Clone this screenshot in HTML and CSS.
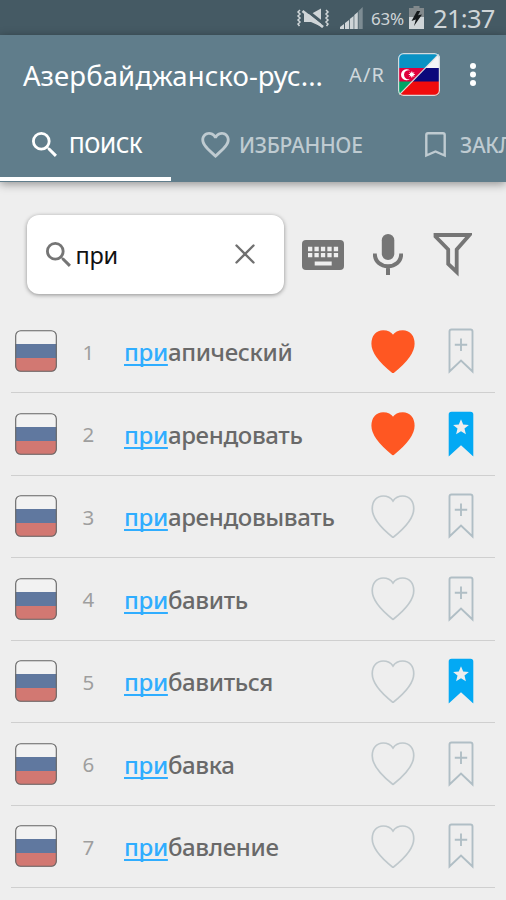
FILE: index.html
```html
<!DOCTYPE html>
<html lang="ru">
<head>
<meta charset="utf-8">
<title>Словарь</title>
<link rel="stylesheet" href="styles.css">
</head>
<body>
<svg class="defs" width="0" height="0">
  <symbol id="search" viewBox="3 3 17.5 17.5"><path d="M15.5 14h-.79l-.28-.27A6.471 6.471 0 0 0 16 9.5 6.5 6.5 0 1 0 9.5 16c1.61 0 3.09-.59 4.23-1.57l.27.28v.79l5 4.99L20.49 19l-4.99-5zm-6 0C7.01 14 5 11.990 5 9.500S7.010 5 9.500 5 14 7.010 14 9.500 11.990 14 9.500 14z"/></symbol>
  <symbol id="flag" viewBox="0 0 42 42"><clipPath id="fc"><rect x=".5" y=".5" width="41" height="41" rx="5"/></clipPath><g clip-path="url(#fc)"><path fill="#f2f2f2" d="M0 0h42v14H0z"/><path fill="#60789f" d="M0 14h42v14H0z"/><path fill="#d27872" d="M0 28h42v14H0z"/></g><rect x=".7" y=".7" width="40.600" height="40.600" rx="5" fill="none" stroke="#636363" stroke-width="1.100"/></symbol>
  <symbol id="heart" viewBox="0 0 44 44"><path stroke-width="1.700" d="M22 43C15 37.500 1 25 1 14C1 5.500 6 1 12 1C16.500 1 20 3 22 6C24 3 27.500 1 32 1C38 1 43 5.500 43 14C43 25 29 37.500 22 43Z"/></symbol>
  <symbol id="mark" viewBox="0 0 26 46"><path fill="none" stroke="#b0bec5" stroke-width="1.900" d="M1.500 43.500V3.500Q1.500 1.500 3.500 1.500H22.500Q24.500 1.500 24.500 3.500V43.500L13 32.500ZM13 10.500V23M6.800 16.700H19.200"/></symbol>
  <symbol id="marked" viewBox="0 0 26 46"><path fill="#03a9f4" d="M.7 45.500V3.500Q.7.700 3.500.700H22.500Q25.300.700 25.300 3.500V45.500L13 34.300Z"/><path fill="#eee" d="M13 8.200l2.200 5.300 5.700.4-4.400 3.700 1.400 5.600-4.900-3-4.900 3 1.400-5.600-4.400-3.700 5.700-.4z"/></symbol>
</svg>

<div class="status">
  <svg class="mute" viewBox="0 0 34 20"><g fill="#cfd5d8"><path d="M8 6h7L25 .5v18L15 14H8z"/></g><path d="M8.500 .5 29 17" stroke="#455a64" stroke-width="3"/><path d="M6.500 3 27 19" stroke="#cfd5d8" stroke-width="2.800"/><path d="M4 2 2 4l2 2-2 2 2 2-2 2 2 2-2 2 1.500 2M30 2l2 2-2 2 2 2-2 2 2 2-2 2 2 2-1.500 2" fill="none" stroke="#cfd5d8" stroke-width="1.500"/></svg>
  <svg class="signal" viewBox="0 0 23 22"><path fill="#cfd5d8" d="M0 22v-2l4-3v5zM5 22v-6l4-3v9zM9.800 22V12l3.800-3v13zM14.300 22V8l3.500-3v17z"/><path fill="#7d8c93" d="M18.500 22V4l4.200-4v22z"/></svg>
  <span class="percent">63%</span>
  <svg class="battery" viewBox="0 0 15 23"><path fill="#82898c" d="M4.500 0h6v2H15v10H0V2h4.500z"/><path fill="#cfd5d8" d="M0 11h15v12H0z"/><path fill="#15191b" d="M8 5h3.200L9 9.300 13 8.500 5 20l1.800-6.500L2.500 15z"/></svg>
  <time>21:37</time>
</div>

<header class="head">
  <div class="bar">
    <h1>Азербайджанско-рус...</h1>
    <span class="lang">A/R</span>
    <svg class="pair" viewBox="0 0 42 43"><clipPath id="pc"><rect width="42" height="43" rx="5"/></clipPath><g clip-path="url(#pc)"><path fill="#0992c4" d="M0 0h42v15H0z"/><path fill="#df003d" d="M0 15h42v14H0z"/><path fill="#00a465" d="M0 28.500h42V43H0z"/><path fill="#f4f4f6" d="M42 0V15H27z"/><path fill="#0b087b" d="M27 15H42V29H14z"/><path fill="#f00b0c" d="M14 28.500H42V43H0z"/><path d="M0 43 42 0" stroke="#ddd" stroke-width="1.200"/></g><path fill="#fff" d="M12 17.500a5.500 5.500 0 1 0 0 8.500a4.500 4.500 0 1 1 0-8.500z"/><circle cx="13.800" cy="21.500" r="2" fill="#fff"/><path d="M13.800 18.500v6M10.800 21.500h6M11.700 19.400l4.200 4.200M15.900 19.400l-4.200 4.200" stroke="#fff"/><rect x=".6" y=".6" width="40.800" height="41.800" rx="5" fill="none" stroke="#d5dadd" stroke-width="1.200"/></svg>
    <svg class="more" viewBox="0 0 6 23"><g fill="#fff"><circle cx="3" cy="3" r="3"/><circle cx="3" cy="11.500" r="3"/><circle cx="3" cy="20" r="3"/></g></svg>
  </div>
  <nav class="tabs">
    <div class="tab active"><svg class="tab-search"><use href="#search"/></svg><span>ПОИСК</span></div>
    <div class="tab fav"><svg class="tab-heart" viewBox="2 3 20 18.350"><path d="M16.500 3c-1.740 0-3.410.810-4.500 2.090C10.910 3.810 9.240 3 7.500 3 4.420 3 2 5.420 2 8.500c0 3.780 3.400 6.860 8.550 11.540L12 21.350l1.450-1.320C18.600 15.360 22 12.280 22 8.500 22 5.420 19.580 3 16.500 3zm-4.400 15.550l-.1.100-.1-.1C7.140 14.240 4 11.390 4 8.500 4 6.500 5.500 5 7.500 5c1.540 0 3.040.990 3.570 2.360h1.870C13.460 5.990 14.960 5 16.500 5c2 0 3.500 1.500 3.500 3.500 0 2.890-3.140 5.740-7.900 10.050z"/></svg><span>ИЗБРАННОЕ</span></div>
    <div class="tab saved"><svg class="tab-mark" viewBox="0 0 21 26"><path d="M1.300 23.500V3Q1.300 1.300 3 1.300H18Q19.700 1.300 19.700 3V23.500L10.500 19.500Z" fill="none" stroke="#bfcbd1" stroke-width="2.400"/></svg><span>ЗАКЛАДКИ</span></div>
  </nav>
</header>

<section class="tools">
  <div class="field"><svg class="field-search"><use href="#search"/></svg><span class="query">при</span><svg class="clear" viewBox="0 0 20 20"><path d="M1.500 1.500l17 17M18.500 1.500l-17 17" stroke="#707070" stroke-width="2.400" stroke-linecap="round"/></svg></div>
  <svg class="keyboard" viewBox="0 0 42 30"><rect width="42" height="30" rx="4" fill="#757575"/><path d="M6 9h30.500M6 15.200h30.500" stroke="#eee" stroke-width="4.300" stroke-dasharray="4.300 2.150"/><path fill="#eee" d="M12.700 21.500h17v4h-17z"/></svg>
  <svg class="mic" viewBox="0 0 30 41"><rect x="8.800" y="0" width="12.500" height="26" rx="6.250" fill="#757575"/><path d="M1.800 19.500C1.800 28 8 32.300 15 32.300S28.200 28 28.200 19.500M15 32v9" stroke="#757575" stroke-width="4" fill="none"/></svg>
  <svg class="filter" viewBox="0 0 39 44"><path d="M2.500 2H36.500L23.700 16.500V39L15.200 31V16.500L2.500 3.500Z" fill="none" stroke="#757575" stroke-width="3.800"/></svg>
</section>

<ul class="list">
  <li><svg class="flag"><use href="#flag"/></svg><span class="num">1</span><span class="word"><u>при</u>апический</span><svg class="heart on"><use href="#heart"/></svg><svg class="mark"><use href="#mark"/></svg></li>
  <li><svg class="flag"><use href="#flag"/></svg><span class="num">2</span><span class="word"><u>при</u>арендовать</span><svg class="heart on"><use href="#heart"/></svg><svg class="mark"><use href="#marked"/></svg></li>
  <li><svg class="flag"><use href="#flag"/></svg><span class="num">3</span><span class="word"><u>при</u>арендовывать</span><svg class="heart"><use href="#heart"/></svg><svg class="mark"><use href="#mark"/></svg></li>
  <li><svg class="flag"><use href="#flag"/></svg><span class="num">4</span><span class="word"><u>при</u>бавить</span><svg class="heart"><use href="#heart"/></svg><svg class="mark"><use href="#mark"/></svg></li>
  <li><svg class="flag"><use href="#flag"/></svg><span class="num">5</span><span class="word"><u>при</u>бавиться</span><svg class="heart"><use href="#heart"/></svg><svg class="mark"><use href="#marked"/></svg></li>
  <li><svg class="flag"><use href="#flag"/></svg><span class="num">6</span><span class="word"><u>при</u>бавка</span><svg class="heart"><use href="#heart"/></svg><svg class="mark"><use href="#mark"/></svg></li>
  <li><svg class="flag"><use href="#flag"/></svg><span class="num">7</span><span class="word"><u>при</u>бавление</span><svg class="heart"><use href="#heart"/></svg><svg class="mark"><use href="#mark"/></svg></li>
</ul>
</body>
</html>
```
FILE: styles.css
```css
* { box-sizing: border-box; }
body {
  margin: 0;
  width: 506px;
  height: 900px;
  overflow: hidden;
  background: #eee;
  font-family: "Noto Sans", sans-serif;
}
svg { display: block; flex: none; }
.defs { position: absolute; }

.status {
  height: 35px;
  background: #455a64;
  color: #cfd5d8;
  display: flex;
  align-items: center;
  padding-left: 296px;
}
.mute { width: 34px; height: 20px; }
.signal { width: 23px; height: 22px; margin-left: 10px; }
.percent { width: 36px; margin-left: 8px; font-size: 17px; letter-spacing: -.2px; line-height: 35px; padding-top: 2px; }
.battery { width: 15px; height: 23px; margin-left: 2px; }
time { margin-left: 9px; font-size: 25.500px; letter-spacing: -.7px; line-height: 35px; padding-top: 2px; }

.head {
  height: 146.500px;
  background: #607d8b;
  box-shadow: 0 2px 9px rgba(0, 0, 0, .4);
}
.bar { height: 79px; display: flex; align-items: center; padding-left: 23px; }
h1 { margin: 0; width: 326px; color: #fff; font-size: 27.500px; letter-spacing: .08px; font-weight: 400; line-height: 36px; white-space: nowrap; padding-top: 2px; }
.lang { width: 49px; color: #cfd8dc; font-size: 20px; letter-spacing: 1.200px; }
.pair { width: 42px; height: 43px; }
.more { width: 6px; height: 23px; margin-left: 29.500px; }

.tabs { display: flex; height: 67px; overflow: hidden; }
.tab { flex: none; display: flex; align-items: center; color: #bfcbd1; fill: #bfcbd1; font-size: 21px; letter-spacing: -.3px; font-weight: 500; padding-bottom: 5px; }
.tab span { margin-top: -1px; }
.tab.active { width: 171px; color: #fff; fill: #fff; padding: 0 0 1px 32px; border-bottom: 4px solid #fff; }
.tab-search { width: 25px; height: 25px; margin: -1px 12px 0 0; }
.tab.active span { margin-top: 0; }
.fav { width: 224px; padding-left: 30px; }
.tab-heart { width: 29px; height: 26px; margin: -1px 9px 0 0; }
.saved { padding-left: 30px; }
.tab-mark { width: 21px; height: 26px; margin-right: 14px; }

.tools { height: 129px; display: flex; align-items: center; padding: 17px 0 0 26.500px; }
.field {
  width: 257.500px;
  height: 79px;
  display: flex;
  align-items: center;
  padding: 0 29px 0 19px;
  background: #fff;
  border-radius: 12px;
  box-shadow: 0 1px 4px rgba(0, 0, 0, .4);
}
.field-search { width: 25px; height: 25px; fill: #757575; margin-top: -1px; }
.query { flex: 1; padding-left: 5px; font-size: 23.500px; letter-spacing: -.3px; color: #111; }
.clear { width: 20px; height: 20px; margin-top: -1px; }
.keyboard { width: 42px; height: 30px; margin-left: 18px; }
.mic { width: 30px; height: 41px; margin-left: 29px; margin-top: -1px; }
.filter { width: 39px; height: 44px; margin-left: 30px; margin-top: 1px; }

.list { list-style: none; margin: 0 11px; padding: 0; }
.list li { height: 82.500px; display: flex; align-items: center; border-bottom: 1px solid #cfcfcf; padding-left: 4px; }
.flag { width: 42px; height: 42px; }
.num { width: 67px; padding: 1px 0 0 25.500px; font-size: 20.500px; color: #9e9e9e; }
.word { width: 247px; font-size: 24px; letter-spacing: -.35px; font-weight: 500; color: #696969; white-space: nowrap; padding-top: 1px; }
.word u { color: #2fadff; text-decoration-thickness: 1.500px; text-underline-offset: 3px; text-decoration-skip-ink: none; }
.heart { width: 44px; height: 43.500px; fill: none; stroke: #bfc8cc; }
.heart.on { fill: #ff5722; stroke: #ff5722; }
.mark { width: 26px; height: 46px; margin-left: 33px; }
```
